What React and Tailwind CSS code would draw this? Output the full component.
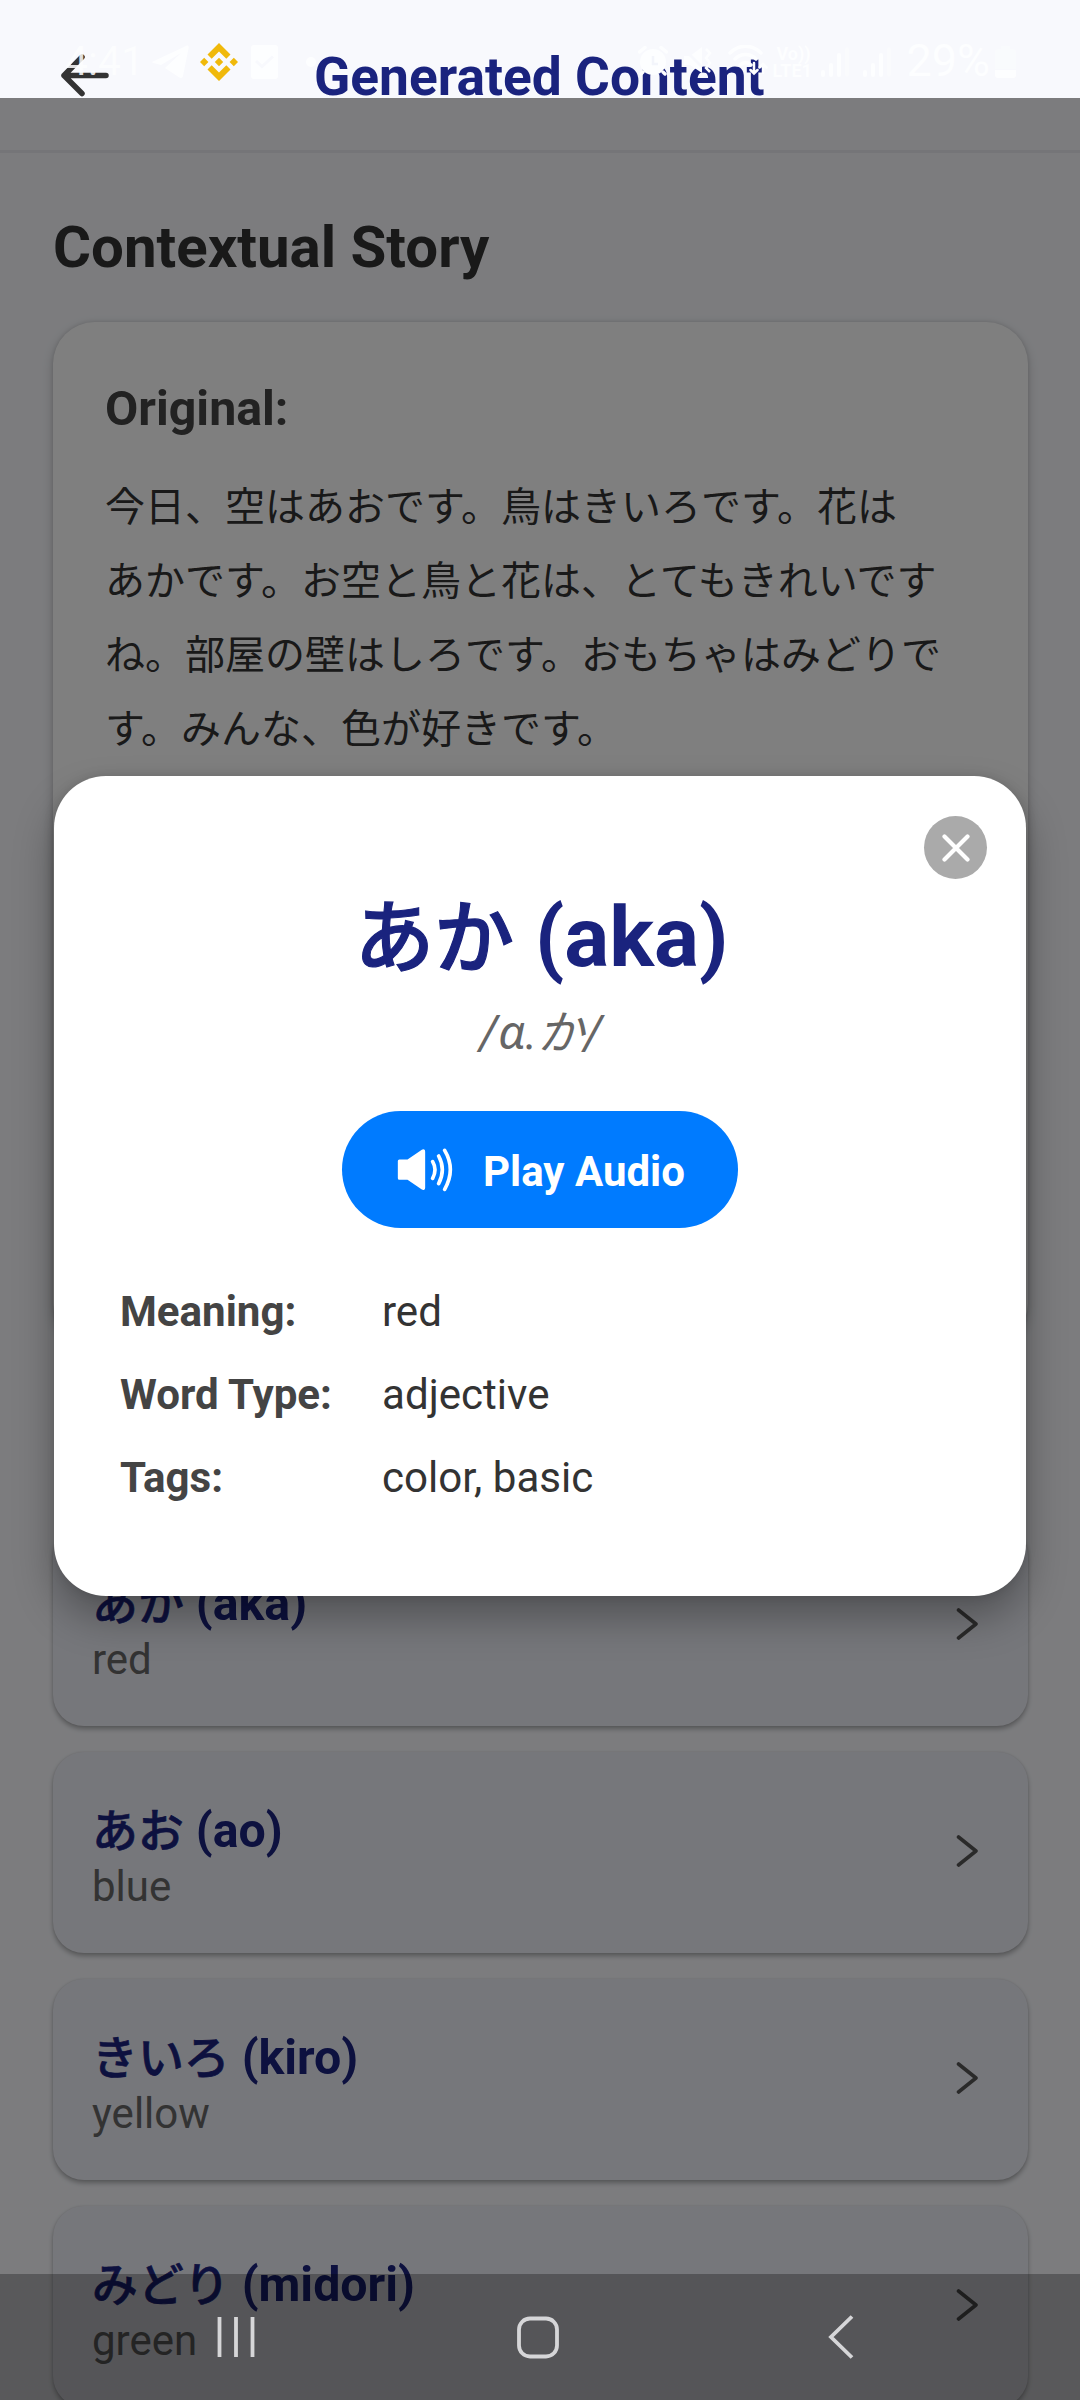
const words = [
  { ja: "あか", romaji: "aka", meaning: "red" },
  { ja: "あお", romaji: "ao", meaning: "blue" },
  { ja: "きいろ", romaji: "kiro", meaning: "yellow" },
  { ja: "みどり", romaji: "midori", meaning: "green" },
];

const storyLines = [
  "今日、空はあおです。鳥はきいろです。花は",
  "あかです。お空と鳥と花は、とてもきれいです",
  "ね。部屋の壁はしろです。おもちゃはみどりで",
  "す。みんな、色が好きです。",
];

const details = [
  ["Meaning:", "red"],
  ["Word Type:", "adjective"],
  ["Tags:", "color, basic"],
];

function Kana({ children }) {
  return (
    <span lang="ja" className="text-[0.95em] font-medium [-webkit-text-stroke:0.014em_currentColor]">
      {children}
    </span>
  );
}

function StatusBar() {
  return (
    <div className="absolute inset-x-0 top-0 flex h-[124px] items-center pl-[65px] text-[#fdfeff]">
      <span className="mb-[3px] w-[87px] text-[41px] leading-[40px] opacity-85">4:41</span>
      <svg className="h-[34px] w-[37px]" viewBox="0 0 37 34" fill="currentColor">
        <path d="M2 16 34 1c2-1 3 0 2.600 2L31 31c-.5 2-2 2.500-4 1.200L13 23 29 8 9 20 1.500 18c-2-.5-1.500-1.300.5-2z" />
      </svg>
      <svg className="ml-[10.500px] h-[38px] w-[38px]" viewBox="0 0 38 38" fill="#f0b90b">
        <path d="M19 0 30.500 11.500 26.300 15.700 19 8.500 11.700 15.700 7.500 11.500z" />
        <path d="M19 38 30.500 26.500 26.300 22.300 19 29.500 11.700 22.300 7.500 26.500z" />
        <path d="M19 14.800 23.200 19 19 23.200 14.800 19zM4.200 14.800 8.400 19 4.200 23.200 0 19zM33.800 14.800 38 19 33.800 23.200 29.600 19z" />
      </svg>
      <svg className="ml-[13px] h-[34px] w-[27px]" viewBox="0 0 27 34">
        <rect width="27" height="34" rx="3" fill="currentColor" />
        <path d="M5 16l6 5.500 11-10" fill="none" stroke="#f8f9fd" strokeWidth="3" />
      </svg>
      <span className="ml-[28px] h-[10px] w-[10px] rounded-full bg-[#fdfeff]" />

      <svg className="ml-[322px] h-[32px] w-[30px]" viewBox="0 0 30 32">
        <circle cx="15" cy="16" r="13" fill="currentColor" />
        <path d="M1.500 6 7 1.500M28.500 6 23 1.500M5 26l-2 2M25 26l2 2" stroke="currentColor" strokeWidth="3.500" strokeLinecap="round" />
        <path d="M15 10v8h5" fill="none" stroke="#f3f5fb" strokeWidth="2.500" />
      </svg>
      <svg className="ml-[15px] h-[32px] w-[30px]" viewBox="0 0 30 32">
        <path d="M1 10h6L19 1v26L7 19H1z" fill="currentColor" />
        <path d="M1 3l18 18" stroke="#f8f9fd" strokeWidth="3" />
        <path d="M23 3l4 4-4 5 4 5-4 5 4 4" fill="none" stroke="currentColor" strokeWidth="2.500" />
      </svg>
      <svg className="ml-[15px] h-[34px] w-[40px]" viewBox="0 0 40 34" fill="none" stroke="currentColor" strokeWidth="3.500" strokeLinecap="round">
        <path d="M2 8c9-9 22-9 31 0M7 14c6-6 15-6 21 0M12 20c4-3 8-3 11 0" />
        <path d="M26 18v10M22.500 25l3.500 3.500L29.500 25M35 28V19M31.500 22.500 35 19l3.500 3.500" strokeWidth="2.500" />
      </svg>
      <span className="ml-[5px] flex w-[40px] flex-col text-[18px] leading-[17px] font-bold whitespace-nowrap">
        <span className="pl-1">Vo))</span>
        <span>LTE1</span>
      </span>
      <svg className="ml-[8px] h-[31px] w-[28px]" viewBox="0 0 28 31" stroke="currentColor" strokeWidth="4" strokeLinecap="round">
        <path d="M2 25v3M10 18v10M18 8v20" />
        <path d="M26 2v26" opacity=".4" />
      </svg>
      <svg className="ml-[14px] h-[31px] w-[28px]" viewBox="0 0 28 31" stroke="currentColor" strokeWidth="4" strokeLinecap="round">
        <path d="M2 25v3M10 18v10M18 8v20" />
        <path d="M26 2v26" opacity=".4" />
      </svg>
      <span className="mb-[3px] ml-[16px] w-[87px] text-[45px] leading-[45px]">29%</span>
      <svg className="ml-px h-[32px] w-[21px]" viewBox="0 0 21 32" fill="currentColor">
        <path d="M6 0h9v3h3a3 3 0 013 3v17H0V6a3 3 0 013-3h3z" opacity=".3" />
        <path d="M0 24h21v5a3 3 0 01-3 3H3a3 3 0 01-3-3z" />
      </svg>
    </div>
  );
}

function WordCard({ ja, romaji, meaning }) {
  return (
    <div className="flex h-[201px] shrink-0 items-center justify-between rounded-[31px] bg-[#edeef6] pr-[49px] pl-[39px] shadow-[0_3px_5px_rgba(0,0,0,0.3),0_0_2px_rgba(0,0,0,0.1)]">
      <div className="pt-[13px]">
        <div className="text-[48.300px] leading-[56px] font-bold text-[#1a237e]">
          <Kana>{ja}</Kana> ({romaji})
        </div>
        <div className="text-[42px] leading-[56px] text-[#666]">{meaning}</div>
      </div>
      <svg className="-mt-[3px] h-[34px] w-[23px]" viewBox="0 0 23 34" fill="none" stroke="#555" strokeWidth="3.600" strokeLinecap="round" strokeLinejoin="round">
        <path d="M2.500 3 20 17 2.500 31" />
      </svg>
    </div>
  );
}

function WordModal() {
  return (
    <div className="absolute top-[776px] left-[54px] h-[820px] w-[972px] rounded-[52px] bg-white px-[66px] pt-[112px] shadow-[0_22px_40px_rgba(0,0,0,0.3),0_0_12px_rgba(0,0,0,0.12)]">
      <button className="absolute top-[40px] right-[39px] flex h-[63px] w-[63px] items-center justify-center rounded-full bg-[#aaa]">
        <svg className="h-[28px] w-[28px]" viewBox="0 0 28 28" stroke="#fff" strokeWidth="4.200" strokeLinecap="round">
          <path d="M2.500 2.500l23 23M25.500 2.500l-23 23" />
        </svg>
      </button>
      <div className="pl-[3px] text-center text-[84px] leading-[100px] font-bold text-[#1a237e]">
        <Kana>あか</Kana> (aka)
      </div>
      <div className="mt-[14px] pl-[2px] text-center text-[47.250px] leading-[60px] text-[#666] italic">
        /ɑ.<span lang="ja" className="text-[0.98em]">か</span>/
      </div>
      <button className="mx-auto mt-[48px] flex h-[117px] w-[396px] items-center rounded-full bg-[#007bff] pl-[55px] text-white">
        <svg className="h-[46px] w-[57px]" viewBox="52 50 171 138" fill="none" stroke="#fff" strokeWidth="11" strokeLinecap="round" strokeLinejoin="round">
          <path d="M59 92h26l44-30q3-2 3 2v108q0 4-3 2L85 144H59z" fill="#fff" strokeWidth="9" />
          <path d="M159 94q14 24 0 50M177 77q22 41 0 83M195 60q34 57 0 117" />
        </svg>
        <span className="mt-[5px] ml-[29px] text-[42px] leading-[50px] font-bold">Play Audio</span>
      </button>
      <dl className="mt-[42px]">
        {details.map(([label, value]) => (
          <div key={label} className="flex h-[83px] items-center text-[42.100px]">
            <dt className="w-[262px] font-bold text-[#444]">{label}</dt>
            <dd className="text-[#333]">{value}</dd>
          </div>
        ))}
      </dl>
    </div>
  );
}

function NavBar() {
  return (
    <div className="absolute inset-x-0 bottom-0 flex h-[126px] items-center bg-black/28 pl-[217px]">
      <svg className="h-[42px] w-[38px]" viewBox="0 0 38 42" stroke="#d6d6d8" strokeWidth="3.800">
        <path d="M2.500 1v40M19 1v40M35.500 1v40" />
      </svg>
      <svg className="ml-[262px] h-[43px] w-[42px]" viewBox="0 0 42 43" fill="none" stroke="#d6d6d8" strokeWidth="3.800">
        <rect x="2" y="2.500" width="38" height="38" rx="11" />
      </svg>
      <svg className="ml-[269px] h-[44px] w-[26px]" viewBox="0 0 26 44" fill="none" stroke="#d6d6d8" strokeWidth="3.800">
        <path d="M24 1.500 3 22l21 20.500" />
      </svg>
    </div>
  );
}

export default function App() {
  return (
    <div className="relative h-[2400px] w-[1080px] overflow-hidden bg-[#f8f9fd] [font-family:Roboto,'Noto_Sans','Noto_Sans_CJK_JP',sans-serif]">
      <header className="flex h-[153px] items-center border-b-[3px] border-[#eaebf0] pl-[60px]">
        <svg className="h-[44px] w-[50px]" viewBox="0 0 50 44" fill="none" stroke="#333" strokeWidth="5.500" strokeLinecap="round" strokeLinejoin="round">
          <path d="M22 4 4 22.500l18 18M4 22.500h42" />
        </svg>
        <h1 className="mt-[3px] ml-[204px] text-[53.300px] leading-[60px] font-bold whitespace-nowrap text-[#1a237e]">Generated Content</h1>
      </header>

      <main className="flex flex-col pr-[52px] pl-[53px]">
        <h2 className="mt-[60px] text-[58.200px] leading-[68px] font-bold text-[#333]">Contextual Story</h2>
        <section className="mt-[41px] h-[1023px] rounded-[42px] bg-white pt-[59px] pl-[52px] shadow-[0_4px_12px_rgba(0,0,0,0.2),0_0_4px_rgba(0,0,0,0.12)]">
          <h3 className="text-[48.300px] leading-[56px] font-bold text-[#444]">Original:</h3>
          <div lang="ja" className="mt-[34px] text-[40px] leading-[74px] whitespace-nowrap text-[#333]">
            {storyLines.map((line) => (
              <p key={line}>{line}</p>
            ))}
          </div>
        </section>
        <div className="mt-[180px] flex flex-col gap-[26px]">
          {words.map((w) => (
            <WordCard key={w.romaji} {...w} />
          ))}
        </div>
      </main>

      <div className="absolute inset-x-0 top-[98px] bottom-0 bg-black/50" />
      <StatusBar />
      <WordModal />
      <NavBar />
    </div>
  );
}
